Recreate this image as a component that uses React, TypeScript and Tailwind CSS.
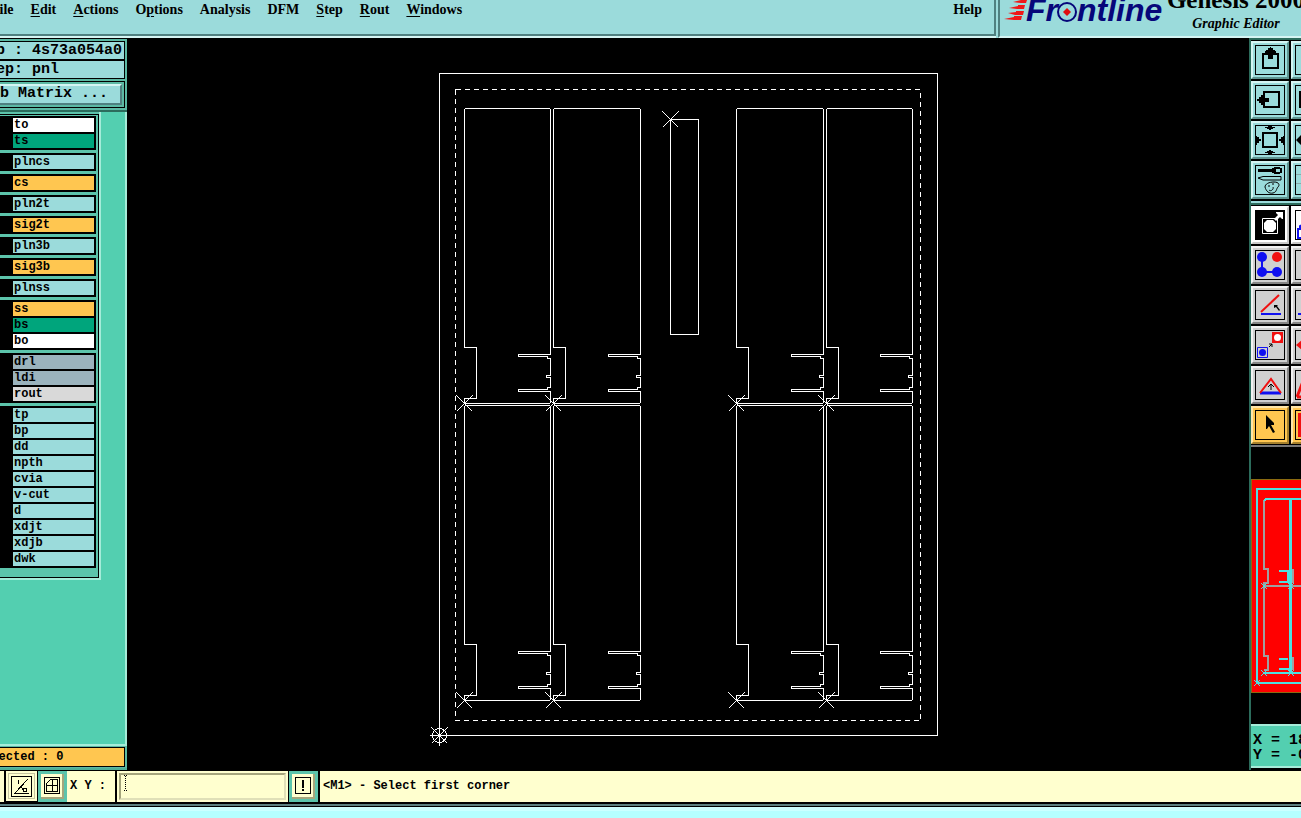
import type { ReactNode } from 'react';

const MENUS = [
    { before: '', key: 'F', after: 'ile' },
    { before: '', key: 'E', after: 'dit' },
    { before: '', key: 'A', after: 'ctions' },
    { before: 'O', key: 'p', after: 'tions' },
    { before: 'Analysis', key: '', after: '' },
    { before: 'DFM', key: '', after: '' },
    { before: '', key: 'S', after: 'tep' },
    { before: '', key: 'R', after: 'out' },
    { before: '', key: 'W', after: 'indows' },
];

const LAYER_COLORS = {
    white: 'bg-white',
    mask: 'bg-[#00a57c]',
    plane: 'bg-[#9bdbdb]',
    signal: 'bg-[#ffc650]',
    drill: 'bg-[#9bb3bd]',
    rout: 'bg-[#d9d9d9]',
};

type Layer = [name: string, color: keyof typeof LAYER_COLORS];

const LAYER_GROUPS: Layer[][] = [
    [['to', 'white'], ['ts', 'mask']],
    [['plncs', 'plane']],
    [['cs', 'signal']],
    [['pln2t', 'plane']],
    [['sig2t', 'signal']],
    [['pln3b', 'plane']],
    [['sig3b', 'signal']],
    [['plnss', 'plane']],
    [['ss', 'signal'], ['bs', 'mask'], ['bo', 'white']],
    [['drl', 'drill'], ['ldi', 'drill'], ['rout', 'rout']],
    [
        ['tp', 'plane'], ['bp', 'plane'], ['dd', 'plane'], ['npth', 'plane'], ['cvia', 'plane'],
        ['v-cut', 'plane'], ['d', 'plane'], ['xdjt', 'plane'], ['xdjb', 'plane'], ['dwk', 'plane'],
    ],
];

const SERIF = "font-['Liberation_Serif',serif]";

function Header() {
    return (
        <header className={`flex h-[38px] shrink-0 overflow-hidden bg-[#9bdbdb] font-bold text-black ${SERIF}`}>
            <nav className="mb-[2px] flex flex-1 items-start justify-between border-r-2 border-b-2 border-[#4f8080] pr-3 text-[14px] leading-[20px] shadow-[0_2px_0_#d5f5f3]">
                <div className="-ml-[9px] flex gap-[17px]">
                    {MENUS.map(m => (
                        <button key={m.before + m.key + m.after} className="whitespace-nowrap">
                            {m.before}
                            {m.key && <span className="underline underline-offset-2">{m.key}</span>}
                            {m.after}
                        </button>
                    ))}
                </div>
                <button>Help</button>
            </nav>
            <div className="ml-[2px] flex w-[303px] border-b-2 border-l-2 border-b-[#d5f5f3] border-l-[#4f8080]">
                <svg width="168" height="36" viewBox="1000 0 168 36" className="shrink-0">
                    <g fill="#f01818">
                        <path d="M1013 2l8-2h6l-1 3h-5z" />
                        <path d="M1009 8l9-2v-1h7l-1 4h-7z" />
                        <path d="M1008 13l8-1v-1h8l-1 4h-8z" />
                        <path d="M1004 19l10-2v-1h8l-1 4h-7z" />
                    </g>
                    <g fill="#06067a" fontFamily="Liberation Sans, sans-serif" fontWeight="bold" fontStyle="italic" fontSize="32">
                        <text x="1026" y="21">Fr</text>
                        <text x="1077" y="21">ntline</text>
                    </g>
                    <circle cx="1067" cy="12" r="9" fill="none" stroke="#06067a" strokeWidth="2" />
                    <path d="M1067 8l4 4-4 4-4-4z" fill="#e01010" />
                </svg>
                <div className="flex w-[136px] shrink-0 flex-col items-center whitespace-nowrap">
                    <h1 className="-mt-[14px] text-[25px] leading-[28px]">Genesis 2000</h1>
                    <p className="text-[14px] leading-[20px] italic">Graphic Editor</p>
                </div>
            </div>
        </header>
    );
}

function Sidebar() {
    return (
        <aside className="flex w-[127px] shrink-0 flex-col overflow-hidden bg-[#53cfb0] font-bold text-black">
            <div className="border-t border-b-2 border-t-black border-b-[#2c6c5c] bg-[#5cb9a4] py-[2px] pr-[2px] text-[15px] whitespace-pre">
                <p className="h-[19px] border-y border-r border-black bg-[#9bdbdb] leading-[18px]">
                    <span className="-ml-[22px]">Job : 4s73a054a0</span>
                </p>
                <p className="h-[19px] border-y border-r border-black bg-[#9bdbdb] leading-[18px]">
                    <span className="-ml-[22px]">Step: pnl</span>
                </p>
                <div className="mt-[2px] h-[27px] border-y border-r border-black py-[2px] pr-[2px]">
                    <button className="flex h-full w-full items-center border-t-2 border-r-2 border-b-2 border-t-[#d5f5f3] border-r-[#4f8080] border-b-[#4f8080] bg-[#9bdbdb]">
                        <span className="-ml-[18px]">Job Matrix ...</span>
                    </button>
                </div>
            </div>

            <div className="flex-1 border-r-2 border-[#a5ecd9]">
                <div className="w-[101px] border-r-2 border-b-2 border-[#a5ecd9] bg-[#5cc4ab] pt-[2px]">
                    <ul className="flex flex-col gap-[3px] border-y border-r border-black pt-px pr-[2px] pb-[9px]">
                        {LAYER_GROUPS.map(group => (
                            <li key={group[0][0]} className="flex flex-col gap-[2px] bg-black py-[2px] pr-[2px] pl-[13px]">
                                {group.map(([name, color]) => (
                                    <button
                                        key={name}
                                        className={`h-[14px] px-px text-left text-[12px] leading-[14px] ${LAYER_COLORS[color]}`}
                                    >
                                        {name}
                                    </button>
                                ))}
                            </li>
                        ))}
                    </ul>
                </div>
            </div>

            <div className="border-t-2 border-b-2 border-t-[#a5ecd9] border-b-[#4fae98] bg-[#5cb9a4] pt-px pr-[2px] pb-px">
                <p className="h-[20px] border-y border-r border-black bg-[#ffc650] text-[12px] leading-[18px] whitespace-nowrap">
                    <span className="-ml-[23px]">Selected : 0</span>
                </p>
            </div>
        </aside>
    );
}

// One board outline with its left step, the two long slots and the small key notch
function boardPath(x: number, y: number, w: number) {
    const r = x + w;
    return `M${x} ${y + 1}l1 -1H${r - 1}l1 1V${y + 246}H${r - 32}v2H${r - 3}v2H${r}V${y + 267}H${r - 4}v2H${r}V${y + 279}`
        + `H${r - 3}v2H${r - 32}v2H${r}V${y + 294}l-1 1H${x}v-5H${x + 12}V${y + 239}H${x}Z`;
}

const BOARD_COLUMNS = [[464, 86], [553, 87], [736, 87], [826, 86]];

function Cross({ x, y, size = 8 }: { x: number; y: number; size?: number }) {
    return <path d={`M${x - size} ${y - size}L${x + size} ${y + size}M${x - size} ${y + size}L${x + size} ${y - size}`} />;
}

function PanelCanvas() {
    return (
        <main className="min-w-0 flex-1 bg-black">
            <svg className="h-full w-full" viewBox="127 38 1122 732" fill="none" stroke="#fff" shapeRendering="crispEdges">
                <g transform="translate(.5 .5)">
                    <rect x="439" y="73" width="498" height="662" />
                    <rect x="455" y="89" width="465" height="631" strokeDasharray="5 4" />
                    <rect x="670" y="119" width="28" height="215" />
                    {[108, 405].map(y => BOARD_COLUMNS.map(([x, w]) => <path key={`${x}-${y}`} d={boardPath(x, y, w)} />))}
                    {[403, 700].map(y => BOARD_COLUMNS.map(([x]) => <Cross key={`${x}-${y}`} x={x} y={y} />))}
                    <Cross x={670} y={119} />
                    <Cross x={439} y={735} />
                    <circle cx="439" cy="735" r="7" />
                    <path d="M429 735h20M439 725v20" />
                </g>
            </svg>
        </main>
    );
}

const TOOL_TONES = {
    teal: 'bg-[#9bdbdb] border-t-[#d5f5f3] border-l-[#d5f5f3] border-r-[#5f9490] border-b-[#5f9490]',
    gray: 'bg-[#d0d0d0] border-t-[#f2f2f2] border-l-[#f2f2f2] border-r-[#858585] border-b-[#858585]',
    white: 'bg-white border-white border-r-[#c8c8c8] border-b-[#c8c8c8]',
    amber: 'bg-[#ffc650] border-t-[#ffe6a8] border-l-[#ffe6a8] border-r-[#a5802c] border-b-[#a5802c]',
};

function Tool({ label, tone, children }: { label: string; tone: keyof typeof TOOL_TONES; children: ReactNode }) {
    return (
        <button aria-label={label} className={`h-[38px] w-[38px] border-2 p-[2px] ${TOOL_TONES[tone]}`}>
            <svg viewBox="0 0 28 28" className="h-full w-full border border-black" fill="none">{children}</svg>
        </button>
    );
}

function Toolbar() {
    return (
        <aside className="flex w-[52px] shrink-0 flex-col overflow-hidden border-l-2 border-[#2c6c5c] bg-black">
            <div className="grid grid-cols-[38px_38px] gap-[2px] border-t-2 border-b-2 border-t-[#2c6c5c] border-b-[#9bdbdb] pt-px pb-[2px]">
                <Tool label="Pan up" tone="teal">
                    <path d="M7 8h15v14H7z" stroke="#000" strokeWidth="2" />
                    <path d="M14 1h1v1h2v2h2v1h1v3h-3v5h-5V8H9V5h1V4h2V2h2z" fill="#000" />
                </Tool>
                <Tool label="Pan down" tone="teal"><path d="M7 6h15v14H7z" stroke="#000" strokeWidth="2" /></Tool>
                <Tool label="Pan left" tone="teal">
                    <path d="M8 6h15v15H8z" stroke="#000" strokeWidth="2" />
                    <path d="M1 13h2v-2h2V9h3v3h5v4H8v3H5v-2H3v-2H1z" fill="#000" />
                </Tool>
                <Tool label="Pan right" tone="teal"><path d="M4 6h15v15H4z" stroke="#000" strokeWidth="2" /></Tool>
                <Tool label="Zoom out" tone="teal">
                    <path d="M7 7h14v14H7z" stroke="#000" strokeWidth="2" />
                    <path d="M12 0h4v1h3v1h-2v1h-2v1h-2V3h-2V2H9V1h3zM12 28h4v-1h3v-1h-2v-1h-2v-1h-2v1h-2v1H9v1h3z" fill="#000" />
                    <path d="M0 10h1v1h2v2h2v2H3v2H1v2H0zM28 10h-1v1h-2v2h-2v2h2v2h2v2h1z" fill="#000" />
                </Tool>
                <Tool label="Zoom in" tone="teal"><path d="M0 14l5-5v3h4v4H5v3z" fill="#000" /></Tool>
                <Tool label="Options" tone="teal">
                    <path d="M2 3h14V2h2V1h6v2h-4v3h4v2h-6V7h-2V6H2z" fill="#000" />
                    <path d="M24 2h2v5h-2z" fill="#000" />
                    <path d="M2 12l5-1.500h18v3.500H7z" stroke="#000" />
                    <path d="M9 21c0-3 4-5 9-5 5 0 6 3 4 5s-1 5-5 6-7-2-8-6z" stroke="#000" />
                    <path d="M12 20h2M16 18h2M13 24c2 2 5-1 4-3" stroke="#000" />
                </Tool>
                <Tool label="Grid" tone="teal"><path d="M0 8.500h28M0 17.500h28" stroke="#8aa" /></Tool>
            </div>

            <div className="grid grid-cols-[38px_38px] gap-[2px] border-t-2 border-b-2 border-[#777] border-t-[#2c6c5c] pt-px pb-px">
                <Tool label="Select feature" tone="white">
                    <path d="M0 0h28v28H0z" fill="#000" />
                    <path d="M6.500 7.500h15v15h-15z" stroke="#fff" />
                    <path d="M11 9h6l3 3v6l-3 3h-6l-3-3v-6z" fill="#fff" />
                    <path d="M18 8l4-4-2-2V1h7v7h-1l-2-2-4 4z" fill="#fff" />
                </Tool>
                <Tool label="Lock feature" tone="white"><path d="M2 27V18h10v9zM4 18v-3l4-2" stroke="#1010f0" strokeWidth="2" /></Tool>
                <Tool label="Net nodes" tone="gray">
                    <path d="M6 6v15h15" stroke="#1010f0" strokeWidth="2" />
                    <g fill="#1010f0"><circle cx="6" cy="6" r="5" /><circle cx="6" cy="21" r="5" /><circle cx="21" cy="21" r="5" /></g>
                    <circle cx="21" cy="6" r="5" fill="#f01010" />
                </Tool>
                <Tool label="Net path" tone="gray">{null}</Tool>
                <Tool label="Angle" tone="gray">
                    <path d="M5 21L23 4" stroke="#f01010" strokeWidth="2" />
                    <path d="M5 23h20" stroke="#1010f0" strokeWidth="2" />
                    <path d="M18 14h4l-1 1 3 4-1 1-3-4-2 1z" fill="#000" />
                </Tool>
                <Tool label="Parallel" tone="gray"><path d="M2 23h8" stroke="#1010f0" strokeWidth="2" /></Tool>
                <Tool label="Copy shape" tone="gray">
                    <path d="M16 1h11v11H16z" fill="#f01010" />
                    <circle cx="21.500" cy="6.500" r="3.500" fill="#fff" />
                    <path d="M1.500 16.500h10v10h-10z" stroke="#1010f0" />
                    <circle cx="6.500" cy="21.500" r="3.500" fill="#1010f0" />
                    <path d="M13 16l3-3M13 13h3v3" stroke="#000" />
                </Tool>
                <Tool label="Move shape" tone="gray"><path d="M0 14l6-5v10z" fill="#f01010" /></Tool>
                <Tool label="Triangle" tone="gray">
                    <path d="M4 22h21" stroke="#1010f0" strokeWidth="3" />
                    <path d="M4 22L15 8l10 14" stroke="#f01010" strokeWidth="2" />
                    <path d="M15 13v6M12 16l3-3 3 3" stroke="#000" />
                </Tool>
                <Tool label="Stretch" tone="gray"><path d="M1 26L8 8M1 26h20" stroke="#f01010" strokeWidth="3" /></Tool>
                <Tool label="Pointer" tone="amber">
                    <path d="M10 4l8 8v2h-3l4 7-2 1-4-7-2 3h-1z" fill="#000" />
                </Tool>
                <Tool label="Fill" tone="amber"><path d="M2 2h24v24H2z" fill="#f01010" /></Tool>
            </div>

            <Overview />

            <div className="h-[44px] border-y-2 border-[#a5ecd9] bg-[#53cfb0] pt-[7px] pl-[2px] text-[15px] leading-[15px] font-bold whitespace-nowrap text-black">
                <p>X = 18</p>
                <p>Y = -0</p>
            </div>
            <div className="h-[2px] bg-black" />
        </aside>
    );
}

function Overview() {
    return (
        <div className="flex flex-1 items-center">
            <svg width="50" height="214" viewBox="1251 479 50 214" fill="none" className="shrink-0">
                <rect x="1251.500" y="479.500" width="60" height="213" fill="#f00" stroke="#8a6a10" />
                <g stroke="#a0a0a0" strokeWidth="2" shapeRendering="crispEdges">
                    <path d="M1264 500v69h4v14h-4v73h4v14h-4M1264 586h40M1293 569v14M1293 657v13" />
                </g>
                <g stroke="#4fe0e0" strokeWidth="2" shapeRendering="crispEdges">
                    <path d="M1305 489h-48v194h48M1305 499h-39l-2 2M1264 673h41M1279 571h9v11h-9M1279 659h9M1279 669h12" />
                    <path d="M1290.500 499v174" strokeWidth="3" />
                </g>
                <g stroke="#4fe0e0">
                    <Cross x={1264} y={586} size={3} />
                    <Cross x={1291} y={586} size={3} />
                    <Cross x={1264} y={673} size={3} />
                    <Cross x={1291} y={673} size={3} />
                    <Cross x={1257} y={683} size={3} />
                </g>
            </svg>
        </div>
    );
}

function CommandBar() {
    return (
        <footer className="shrink-0 bg-black pt-px text-[12px] font-bold text-black">
            <div className="flex h-[31px] items-stretch bg-[#ffffcf]">
                <div className="w-[6px] border-r-2 border-black" />
                <button aria-label="Measure angle" className="w-[32px] border-r border-b border-black p-[2px]">
                    <span className="flex h-full w-full items-center justify-center border border-[#c5c5a0]">
                        <svg width="21" height="21" viewBox="0 0 21 21" fill="none" stroke="#000" shapeRendering="crispEdges">
                            <path d="M.5 .5h20v20H.5zM3 17.500h15M4 17L17 3M7 4v4M10 11l4 5" />
                            <circle cx="14" cy="14" r="2" />
                        </svg>
                    </span>
                </button>
                <button aria-label="Toggle grid" className="w-[29px] bg-[#5cc4ab] p-[3px]">
                    <span className="flex h-full w-full items-center justify-center border-r-2 border-b-2 border-[#a5a57c] bg-[#ffffcf]">
                        <svg width="16" height="17" viewBox="0 0 16 17" fill="none" stroke="#000" shapeRendering="crispEdges">
                            <path d="M.5 .5h15v16H.5zM2.500 14.500v-8l4-4h7v12zM8.500 2v13M2 8.500h12" />
                        </svg>
                    </span>
                </button>
                <label htmlFor="xy" className="w-[48px] pl-[3px] leading-[30px] whitespace-pre">X Y :</label>
                <div className="relative w-[173px] border-l-2 border-black p-[2px]">
                    <input
                        id="xy"
                        className="h-full w-full border-2 border-t-[#a5a57c] border-r-[#e0e0b8] border-b-[#e0e0b8] border-l-[#a5a57c] bg-[#ffffcf] px-1 outline-none"
                    />
                    {/* Text caret */}
                    <svg
                        width="5" height="16" viewBox="0 0 5 16" stroke="#000" shapeRendering="crispEdges"
                        className="pointer-events-none absolute top-1 left-[6px]"
                    >
                        <path d="M2.500 1v14" strokeDasharray="1 1" />
                        <path d="M1 .5h1M3 .5h1M1 15.500h1M3 15.500h1" />
                    </svg>
                </div>
                <button aria-label="Alert" className="w-[31px] border-x border-black bg-[#5cc4ab] p-[3px]">
                    <span className="flex h-full w-full items-center justify-center border-r-2 border-b-2 border-[#a5a57c] bg-[#ffffcf]">
                        <svg width="16" height="17" viewBox="0 0 16 17" fill="none" stroke="#000" shapeRendering="crispEdges">
                            <path d="M.5 .5h15v16H.5z" />
                            <path d="M8 3v8M8 12v2" strokeWidth="2" />
                        </svg>
                    </span>
                </button>
                <p className="flex-1 border-l border-black pl-[3px] leading-[30px]">&lt;M1&gt; - Select first corner</p>
            </div>
            <div className="mt-[2px] h-[14px] border-t-2 border-[#5c8080]">
                <div className="mt-px h-[11px] border-t-4 border-[#ccffff] bg-[#b5ffff]" />
            </div>
        </footer>
    );
}

export default function App() {
    return (
        <div className="flex h-screen flex-col overflow-hidden bg-[#b5ffff] font-['Liberation_Mono',monospace]">
            <Header />
            <div className="flex min-h-0 flex-1 bg-black">
                <Sidebar />
                <PanelCanvas />
                <Toolbar />
            </div>
            <CommandBar />
        </div>
    );
}
